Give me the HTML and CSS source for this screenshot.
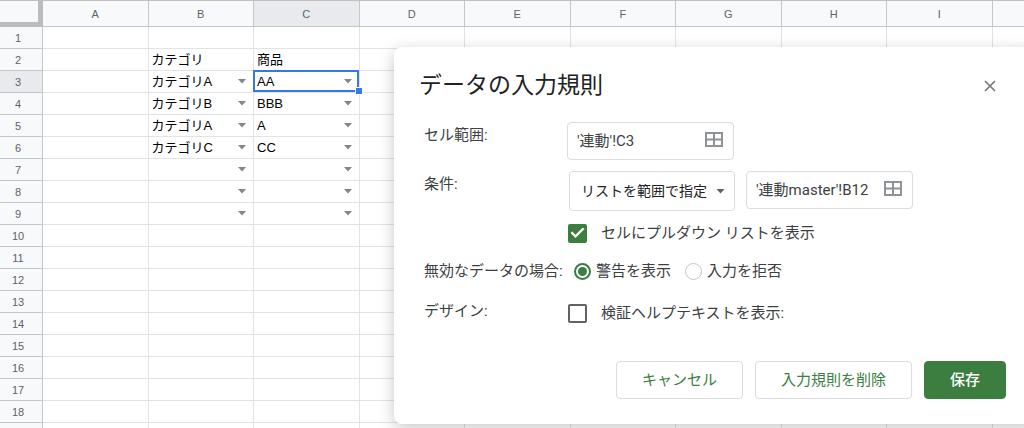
FILE: index.html
```
<!DOCTYPE html>
<html lang="ja">
<head>
<meta charset="utf-8">
<title>データの入力規則</title>
<link rel="stylesheet" href="styles.css">
<script src="sheet.js" defer></script>
</head>
<body>
<svg class="symbols" aria-hidden="true">
  <symbol id="grid-icon" viewBox="0 0 18 15"><path d="M1 1H17V14H1ZM9 1V14M1 7.5H17" fill="none" stroke="currentColor" stroke-width="2"/></symbol>
  <symbol id="arrow-icon" viewBox="0 0 8 5"><path d="M0 0H8L4 4.5Z" fill="currentColor"/></symbol>
</svg>

<main class="sheet">
  <table class="grid">
    <thead><tr class="columns"><th class="corner" aria-label="すべて選択"></th></tr></thead>
    <tbody class="rows"></tbody>
  </table>
</main>

<section class="dialog" role="dialog" aria-labelledby="dialog-title">
  <header class="dialog-header">
    <h1 class="dialog-title" id="dialog-title">データの入力規則</h1>
    <button class="close" type="button" aria-label="閉じる">
      <svg width="12" height="12" viewBox="0 0 12 12"><path d="M1 1L11 11M11 1L1 11" fill="none" stroke="currentColor" stroke-width="1.6"/></svg>
    </button>
  </header>
  <form class="form">
    <div class="row">
      <label class="label" for="range">セル範囲:</label>
      <div class="range">
        <input class="range-input" id="range" type="text" value="'連動'!C3">
        <button class="range-button" type="button" aria-label="データ範囲を選択"><svg width="18" height="15"><use href="#grid-icon"/></svg></button>
      </div>
    </div>
    <div class="row">
      <label class="label" for="criteria">条件:</label>
      <div class="criteria">
        <div class="select">
          <select class="select-box" id="criteria"><option>リストを範囲で指定</option></select>
          <svg class="select-arrow" width="9" height="5"><use href="#arrow-icon"/></svg>
        </div>
        <div class="range">
          <input class="range-input" type="text" aria-label="条件の範囲" value="'連動master'!B12">
          <button class="range-button" type="button" aria-label="データ範囲を選択"><svg width="18" height="15"><use href="#grid-icon"/></svg></button>
        </div>
      </div>
    </div>
    <div class="row row-check">
      <span class="label"></span>
      <label class="option"><input class="check" type="checkbox" checked>セルにプルダウン リストを表示</label>
    </div>
    <div class="row row-radio" role="radiogroup" aria-labelledby="invalid-label">
      <span class="label" id="invalid-label">無効なデータの場合:</span>
      <div class="radios">
        <label class="radio-option"><input class="radio" type="radio" name="invalid" checked>警告を表示</label>
        <label class="radio-option"><input class="radio" type="radio" name="invalid">入力を拒否</label>
      </div>
    </div>
    <div class="row">
      <span class="label">デザイン:</span>
      <label class="option option-help"><input class="check" type="checkbox">検証ヘルプテキストを表示:</label>
    </div>
    <footer class="actions">
      <button class="button" type="button">キャンセル</button>
      <button class="button" type="button">入力規則を削除</button>
      <button class="button button-primary" type="submit">保存</button>
    </footer>
  </form>
</section>
</body>
</html>
```
FILE: sheet.js
```
const columns = [..."ABCDEFGHI", ""];
const lastRow = 18;
const values = {
  B2: "カテゴリ", C2: "商品",
  B3: "カテゴリA", C3: "AA",
  B4: "カテゴリB", C4: "BBB",
  B5: "カテゴリA", C5: "A",
  B6: "カテゴリC", C6: "CC"
};
const active = { column: "C", row: 3 };

const head = document.querySelector(".columns");
for (const name of columns) {
  const th = document.createElement("th");
  th.className = "column-head";
  th.scope = "col";
  th.textContent = name;
  if (name === active.column) th.classList.add("is-active");
  head.append(th);
}

const body = document.querySelector(".rows");
for (let row = 1; row <= lastRow + 1; row++) {
  const tr = document.createElement("tr");
  const th = document.createElement("th");
  th.className = "row-head";
  th.scope = "row";
  th.textContent = row <= lastRow ? row : "";
  if (row === active.row) th.classList.add("is-active");
  tr.append(th);
  for (const name of columns) {
    const td = document.createElement("td");
    td.className = "cell";
    const key = name + row;
    const hasList = (name === "B" || name === "C") && row >= 3 && row <= 9;
    if (values[key] || hasList) {
      const content = document.createElement("div");
      content.className = "cell-content";
      content.append(values[key] || "");
      if (hasList) {
        content.insertAdjacentHTML("beforeend",
          `<button class="cell-arrow" type="button" aria-label="${key} のリスト"><svg width="8" height="5"><use href="#arrow-icon"/></svg></button>`);
      }
      td.append(content);
    }
    if (name === active.column && row === active.row) td.classList.add("is-selected");
    tr.append(td);
  }
  body.append(tr);
}
```
FILE: styles.css
```
* { box-sizing: border-box; }

body {
  margin: 0;
  height: 100vh;
  position: relative;
  overflow: hidden;
  background: #fff;
  color: #202124;
  font-family: Roboto, "Noto Sans CJK JP", sans-serif;
}

button, input, select { font: inherit; color: inherit; }
button { cursor: pointer; }

.symbols { position: absolute; width: 0; height: 0; }

/* Spreadsheet */
.sheet { height: 100%; overflow: hidden; }

.grid {
  width: calc(100% + 74px);
  table-layout: fixed;
  border-collapse: separate;
  border-spacing: 0;
  font-family: "Liberation Sans", "Noto Sans CJK JP", sans-serif;
}

.grid th, .grid td { padding: 0; overflow: hidden; }

.corner {
  width: 43px;
  height: 27px;
  background: #f8f9fa;
  border-top: 1px solid #c0c0c0;
  border-right: 5px solid #bcbcbc;
  border-bottom: 5px solid #bcbcbc;
}

.column-head, .row-head {
  background: #f8f9fa;
  color: #5f6368;
  font-size: 11px;
  font-weight: 400;
  line-height: 20px;
  border-right: 1px solid #c4c6c8;
  border-bottom: 1px solid #c4c6c8;
}

.column-head { border-top: 1px solid #c0c0c0; }
.row-head { height: 22px; }
.grid .row-head { padding-right: 6px; }
.column-head.is-active, .row-head.is-active { background: #e8eaed; }

.cell {
  height: 22px;
  border-right: 1px solid #e2e3e3;
  border-bottom: 1px solid #e2e3e3;
  font-size: 13px;
  line-height: 20px;
  color: #000;
}

.cell-content {
  display: flex;
  align-items: center;
  justify-content: space-between;
  height: 20px;
  padding: 0 7px 0 3px;
  white-space: nowrap;
}

.cell-arrow {
  display: flex;
  margin-left: auto;
  padding: 0;
  border: 0;
  background: none;
  color: #80868b;
}

.grid .cell.is-selected { position: relative; overflow: visible; }

.is-selected::before {
  content: "";
  position: absolute;
  inset: -1px 0 0 -1px;
  border: 2px solid #3579e4;
  pointer-events: none;
}

.is-selected::after {
  content: "";
  position: absolute;
  right: -3px;
  bottom: -2px;
  width: 6px;
  height: 6px;
  background: #3579e4;
  outline: 1px solid #fff;
}

/* Dialog */
.dialog {
  position: absolute;
  top: 47px;
  left: 394px;
  right: -12px;
  padding: 24px 30px 25px 25px;
  border-radius: 8px;
  background: #fff;
  box-shadow: 0 4px 16px rgba(0, 0, 0, .22);
}

.dialog-header {
  display: flex;
  align-items: center;
  justify-content: space-between;
  height: 30px;
}

.dialog-title {
  margin: 0;
  font-size: 23px;
  font-weight: 400;
  line-height: 30px;
}

.close {
  display: flex;
  padding: 10px;
  border: 0;
  background: none;
  color: #757575;
}

.form {
  display: flex;
  flex-direction: column;
  gap: 11px;
  margin-top: 21px;
  padding-left: 5px;
  font-size: 15px;
  line-height: 26px;
  color: #3c4043;
}

.row { display: grid; grid-template-columns: 143px 1fr; align-items: start; }
.row-radio { height: 32px; align-items: center; }

.label { white-space: nowrap; }

.range {
  display: flex;
  align-items: center;
  width: 167px;
  height: 38px;
  padding-bottom: 3px;
  border: 1px solid #dadce0;
  border-radius: 4px;
}

.range-input {
  flex: 1;
  min-width: 0;
  height: 32px;
  padding: 0 0 0 9px;
  border: 0;
  outline: 0;
  background: none;
}

.range-button {
  display: flex;
  padding: 0 10px 0 4px;
  border: 0;
  background: none;
  color: #8f9296;
}

.criteria { display: flex; gap: 11px; padding-left: 2px; }

.select { position: relative; width: 166px; }

.select-box {
  display: block;
  appearance: none;
  width: 100%;
  height: 40px;
  padding: 0 20px 0 11px;
  border: 1px solid #dadce0;
  border-radius: 4px;
  background: #fff;
  color: #202124;
  font-size: 14px;
}

.select-arrow {
  position: absolute;
  top: 18px;
  right: 10px;
  color: #5f6368;
  pointer-events: none;
}

.option { display: flex; align-items: center; gap: 14px; height: 22px; padding-left: 1px; white-space: nowrap; }
.option-help { height: 30px; }

.check {
  appearance: none;
  flex: none;
  width: 19px;
  height: 19px;
  margin: 0;
  border: 2px solid #5f6368;
  border-radius: 2px;
}

.check:checked {
  display: grid;
  place-items: center;
  border-color: #3b7e3f;
  background: #3b7e3f;
}

.check:checked::before {
  content: "";
  width: 14px;
  height: 11px;
  background: #fff;
  clip-path: polygon(0 50%, 12% 36%, 36% 66%, 87% 0, 100% 14%, 36% 96%);
}

.radios { display: flex; gap: 14px; padding-left: 7px; }
.radio-option { display: flex; align-items: center; gap: 5px; white-space: nowrap; }

.radio {
  appearance: none;
  display: grid;
  place-items: center;
  width: 17px;
  height: 17px;
  margin: 0;
  border: 1px solid #c6c6c6;
  border-radius: 50%;
}

.radio:checked { border: 2px solid #3b7e3f; }

.radio:checked::before {
  content: "";
  width: 9px;
  height: 9px;
  border-radius: 50%;
  background: #3b7e3f;
}

.actions {
  display: flex;
  justify-content: flex-end;
  gap: 12px;
  margin-top: 22px;
}

.button {
  height: 38px;
  padding: 0 25px;
  border: 1px solid #dadce0;
  border-radius: 4px;
  background: #fff;
  color: #3b7e3f;
  white-space: nowrap;
}

.button-primary { border-color: #3b7e3f; background: #3b7e3f; color: #fff; font-weight: 500; }
```
